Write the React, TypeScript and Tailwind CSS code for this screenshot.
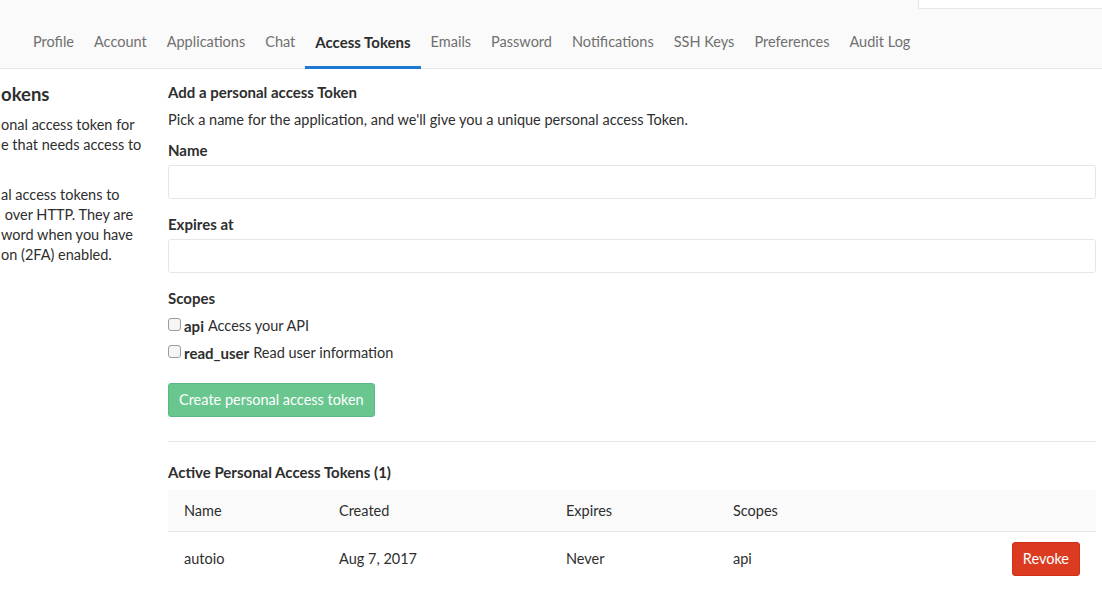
import React from "react";

const navItems = [
  "Profile",
  "Account",
  "Applications",
  "Chat",
  "Access Tokens",
  "Emails",
  "Password",
  "Notifications",
  "SSH Keys",
  "Preferences",
  "Audit Log",
];

export default function App() {
  return (
    <div
      className="w-[1102px] h-[590px] overflow-hidden bg-white text-[#2e2e2e] text-[14.5px]"
      style={{ fontFamily: "Lato, 'Noto Sans', sans-serif" }}
    >
      <div className="relative h-[69px] bg-[#fafafa] border-b border-[#e5e5e5]">
        <div className="absolute right-0 top-0 w-[184px] h-[9px] bg-white border-l border-b border-[#e5e5e5] rounded-bl-[2px]" />
        <div className="flex pl-[23px] pt-[16px]">
          {navItems.map((n) => (
            <div
              key={n}
              className={
                n === "Access Tokens"
                  ? "px-[10px] h-[53px] flex items-center font-bold text-[15px] text-[#2e2e2e] border-b-[3px] border-[#1f78d1] pt-[3px]"
                  : "px-[10px] h-[52px] flex items-center text-[#707070]"
              }
            >
              {n}
            </div>
          ))}
        </div>
      </div>
      <div className="flex">
        <div className="w-[168px] shrink-0 pt-[13px] pl-[1px] whitespace-nowrap">
          <div className="text-[18.5px] font-bold leading-[24px] mb-[9px]">okens</div>
          <div className="leading-[20px]">
            <div>onal access token for</div>
            <div>e that needs access to</div>
            <div>&nbsp;</div>
            <div className="mt-[10px]">al access tokens to</div>
            <div>&nbsp;over HTTP. They are</div>
            <div>word when you have</div>
            <div>on (2FA) enabled.</div>
          </div>
        </div>
        <div className="w-[928px] pt-[13px]">
          <div className="font-bold text-[15px] leading-[20px]">Add a personal access Token</div>
          <div className="mt-[8px] leading-[20px]">
            Pick a name for the application, and we'll give you a unique personal access Token.
          </div>
          <div className="mt-[10px] font-bold text-[15px] leading-[20px]">Name</div>
          <div className="mt-[5px] h-[34px] border border-[#e5e5e5] rounded-[3px] bg-white" />
          <div className="mt-[15px] font-bold text-[15px] leading-[20px]">Expires at</div>
          <div className="mt-[5px] h-[34px] border border-[#e5e5e5] rounded-[3px] bg-white" />
          <div className="mt-[15px] font-bold text-[15px] leading-[20px]">Scopes</div>
          <div className="mt-[8px] flex items-center leading-[20px]">
            <span className="w-[13px] h-[13px] border border-[#9a9a9a] rounded-[3px] bg-[#f5f5f5] mr-[3px] -mt-[3px]" />
            <span className="font-bold text-[15px] mr-[4px]">api</span>
            <span>Access your API</span>
          </div>
          <div className="mt-[7px] flex items-center leading-[20px]">
            <span className="w-[13px] h-[13px] border border-[#9a9a9a] rounded-[3px] bg-[#f5f5f5] mr-[3px] -mt-[3px]" />
            <span className="font-bold text-[15px] mr-[4px]">read_user</span>
            <span>Read user information</span>
          </div>
          <button className="mt-[20px] h-[34px] px-[10px] rounded-[3px] bg-[#69c68f] border border-[#5bb882] text-white leading-[20px]">
            Create personal access token
          </button>
          <div className="mt-[24px] border-t border-[#e5e5e5]" />
          <div className="mt-[20px] font-bold text-[15px] leading-[20px]">Active Personal Access Tokens (1)</div>
          <div className="mt-[8px]">
            <div className="flex h-[42px] items-center bg-[#fafafa] border-b border-[#e5e5e5] pl-[16px]">
              <div className="w-[155px]">Name</div>
              <div className="w-[227px]">Created</div>
              <div className="w-[167px]">Expires</div>
              <div>Scopes</div>
            </div>
            <div className="flex h-[54px] items-center pl-[16px] pr-[16px]">
              <div className="w-[155px]">autoio</div>
              <div className="w-[227px]">Aug 7, 2017</div>
              <div className="w-[167px]">Never</div>
              <div className="flex-1">api</div>
              <button className="h-[34px] px-[10px] rounded-[3px] bg-[#db3b21] border border-[#d22f15] text-white leading-[20px]">
                Revoke
              </button>
            </div>
          </div>
        </div>
      </div>
    </div>
  );
}
